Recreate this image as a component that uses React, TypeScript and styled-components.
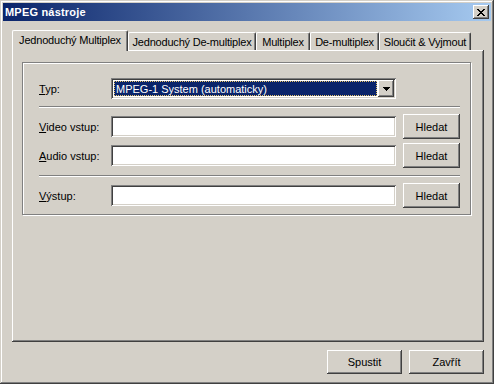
import React from "react"
import styled, { createGlobalStyle, css } from "styled-components"

const face = "#D4D0C8"

const GlobalStyle = createGlobalStyle`
    html, body {
        margin: 0;
        padding: 0;
        background: ${face};
    }
    body {
        font-family: "Liberation Sans", Arial, sans-serif;
        font-size: 11px;
        color: #000;
    }
`

const raised = css`
    box-shadow: inset -1px -1px #404040, inset 1px 1px #ffffff, inset -2px -2px #808080, inset 2px 2px ${face};
`
const sunken = css`
    box-shadow: inset 1px 1px #808080, inset -1px -1px #ffffff, inset 2px 2px #404040, inset -2px -2px ${face};
`

const Window = styled.div`
    box-sizing: border-box;
    width: 494px;
    height: 384px;
    padding: 3px;
    background: ${face};
    box-shadow: inset -1px -1px #404040, inset 1px 1px ${face}, inset -2px -2px #808080, inset 2px 2px #ffffff;
    display: flex;
    flex-direction: column;
`
const TitleBar = styled.div`
    height: 18px;
    display: flex;
    align-items: center;
    justify-content: space-between;
    padding: 0 2px;
    background: linear-gradient(to right, #0a246a, #a6caf0);
`
const TitleText = styled.span`
    color: #fff;
    font-weight: bold;
    font-size: 11px;
    line-height: 14px;
    letter-spacing: 0.2px;
`
const CloseButton = styled.div`
    width: 16px;
    height: 14px;
    background: ${face};
    ${raised};
    display: flex;
    align-items: center;
    justify-content: center;
    svg {
        display: block;
        margin-left: -1px;
    }
`
const Body = styled.div`
    padding: 9px 0 0 9px;
    display: flex;
    flex-direction: column;
    width: 472px;
`
const TabStrip = styled.div`
    height: 20px;
    display: flex;
    align-items: flex-end;
`
const Tab = styled.div<{ $w: number; $active?: boolean }>`
    box-sizing: border-box;
    width: ${p => p.$w}px;
    height: ${p => (p.$active ? 21 : 18)}px;
    margin-bottom: ${p => (p.$active ? -1 : 0)}px;
    position: relative;
    z-index: ${p => (p.$active ? 2 : 1)};
    background: ${face};
    border-top: 1px solid #fff;
    border-left: 1px solid #fff;
    border-right: 1px solid #404040;
    border-radius: 2px 2px 0 0;
    box-shadow: inset -1px 0 #808080;
    display: flex;
    align-items: center;
    justify-content: center;
    padding-bottom: ${p => (p.$active ? 2 : 0)}px;
    letter-spacing: -0.2px;
    white-space: nowrap;
`
const Panel = styled.div`
    box-sizing: border-box;
    width: 472px;
    height: 292px;
    padding: 12px 0 0 10px;
    background: ${face};
    box-shadow: inset -1px -1px #404040, inset 1px 1px #ffffff, inset -2px -2px #808080;
`
const GroupBox = styled.div`
    box-sizing: border-box;
    width: 449px;
    height: 153px;
    border: 1px solid #808080;
    box-shadow: inset 1px 1px #fff, 1px 1px #fff;
    padding: 15px 10px 6px 16px;
    display: flex;
    flex-direction: column;
`
const Row = styled.div<{ $h: number }>`
    display: grid;
    grid-template-columns: 72px 285px 7px 57px;
    align-items: center;
    height: ${p => p.$h}px;
`
const Label = styled.label`
    white-space: nowrap;
    u {
        text-decoration: underline;
        text-underline-offset: 1px;
    }
`
const Separator = styled.div<{ $top: number; $bottom: number }>`
    height: 0;
    border-top: 1px solid #808080;
    border-bottom: 1px solid #fff;
    margin: ${p => p.$top}px 0 ${p => p.$bottom}px;
`
const Gap = styled.div`
    height: 4px;
`
const Field = styled.div`
    box-sizing: border-box;
    height: 21px;
    background: #fff;
    ${sunken};
`
const Combo = styled.div`
    box-sizing: border-box;
    height: 21px;
    padding: 2px;
    background: #fff;
    ${sunken};
    display: flex;
`
const ComboValue = styled.div`
    flex: 1;
    margin: 1px;
    box-sizing: border-box;
    background: #0a246a;
    color: #fff;
    border: 1px dotted #e7c46a;
    padding-left: 1px;
    display: flex;
    align-items: center;
    white-space: nowrap;
    overflow: hidden;
`
const ComboButton = styled.div`
    width: 16px;
    height: 17px;
    background: ${face};
    ${raised};
    display: flex;
    align-items: center;
    justify-content: center;
    svg {
        display: block;
    }
`
const Button = styled.button<{ $w: number; $h: number }>`
    box-sizing: border-box;
    width: ${p => p.$w}px;
    height: ${p => p.$h}px;
    border: none;
    padding: 0;
    background: ${face};
    ${raised};
    font-family: "Liberation Sans", Arial, sans-serif;
    font-size: 11px;
    color: #000;
    display: flex;
    align-items: center;
    justify-content: center;
`
const Footer = styled.div`
    display: flex;
    justify-content: flex-end;
    gap: 7px;
    margin-top: 8px;
`

const CloseGlyph = () => (
    <svg width="8" height="7" viewBox="0 0 8 7" shapeRendering="crispEdges">
        <g fill="#000">
            <rect x="0" y="0" width="2" height="1" />
            <rect x="6" y="0" width="2" height="1" />
            <rect x="1" y="1" width="2" height="1" />
            <rect x="5" y="1" width="2" height="1" />
            <rect x="2" y="2" width="4" height="1" />
            <rect x="3" y="3" width="2" height="1" />
            <rect x="2" y="4" width="4" height="1" />
            <rect x="1" y="5" width="2" height="1" />
            <rect x="5" y="5" width="2" height="1" />
            <rect x="0" y="6" width="2" height="1" />
            <rect x="6" y="6" width="2" height="1" />
        </g>
    </svg>
)

const ArrowGlyph = () => (
    <svg width="7" height="4" viewBox="0 0 7 4" shapeRendering="crispEdges">
        <g fill="#000">
            <rect x="0" y="0" width="7" height="1" />
            <rect x="1" y="1" width="5" height="1" />
            <rect x="2" y="2" width="3" height="1" />
            <rect x="3" y="3" width="1" height="1" />
        </g>
    </svg>
)

const tabs = [
    { label: "Jednoduchý Multiplex", w: 116 },
    { label: "Jednoduchý De-multiplex", w: 128 },
    { label: "Multiplex", w: 54 },
    { label: "De-multiplex", w: 69 },
    { label: "Sloučit & Vyjmout", w: 92 },
]

function App() {
    return (
        <>
            <GlobalStyle />
            <Window>
                <TitleBar>
                    <TitleText>MPEG nástroje</TitleText>
                    <CloseButton>
                        <CloseGlyph />
                    </CloseButton>
                </TitleBar>
                <Body>
                    <TabStrip>
                        {tabs.map((t, i) => (
                            <Tab key={t.label} $w={t.w} $active={i === 0}>
                                {t.label}
                            </Tab>
                        ))}
                    </TabStrip>
                    <Panel>
                        <GroupBox>
                            <Row $h={21}>
                                <Label><u>T</u>yp:</Label>
                                <Combo>
                                    <ComboValue>MPEG-1 System (automaticky)</ComboValue>
                                    <ComboButton>
                                        <ArrowGlyph />
                                    </ComboButton>
                                </Combo>
                            </Row>
                            <Separator $top={7} $bottom={6} />
                            <Row $h={25}>
                                <Label><u>V</u>ideo vstup:</Label>
                                <Field />
                                <span />
                                <Button $w={57} $h={25}>Hledat</Button>
                            </Row>
                            <Gap />
                            <Row $h={25}>
                                <Label><u>A</u>udio vstup:</Label>
                                <Field />
                                <span />
                                <Button $w={57} $h={25}>Hledat</Button>
                            </Row>
                            <Separator $top={7} $bottom={6} />
                            <Row $h={25}>
                                <Label><u>V</u>ýstup:</Label>
                                <Field />
                                <span />
                                <Button $w={57} $h={25}>Hledat</Button>
                            </Row>
                        </GroupBox>
                    </Panel>
                    <Footer>
                        <Button $w={75} $h={24}>Spustit</Button>
                        <Button $w={75} $h={24}>Zavřít</Button>
                    </Footer>
                </Body>
            </Window>
        </>
    )
}

export default App
